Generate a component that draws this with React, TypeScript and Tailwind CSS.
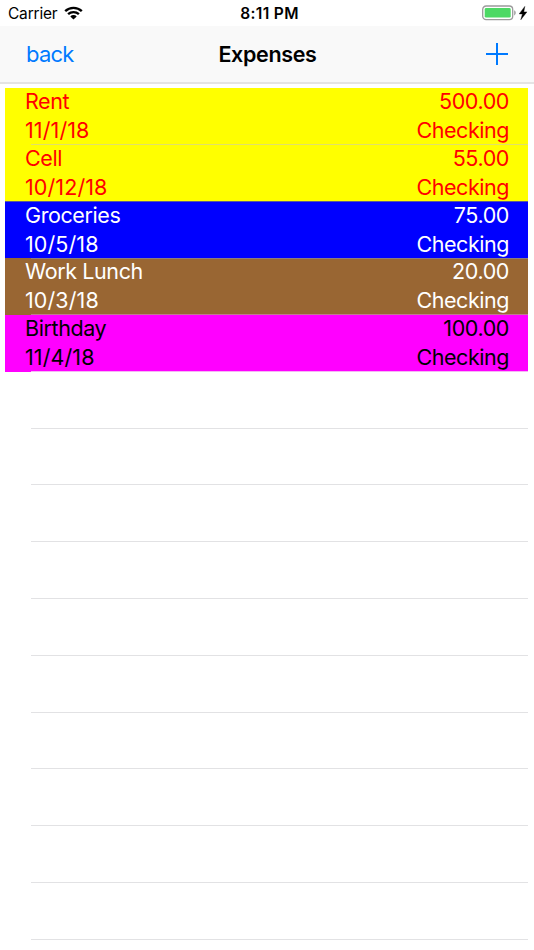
import React from 'react';

interface Expense {
  name: string;
  date: string;
  amount: string;
  account: string;
  colors: string;
  separator: string;
}

const expenses: Expense[] = [
  { name: 'Rent', date: '11/1/18', amount: '500.00', account: 'Checking', colors: 'bg-[#ffff00] text-[#ff0000]', separator: 'ml-[26px] bg-[#e0e06a]' },
  { name: 'Cell', date: '10/12/18', amount: '55.00', account: 'Checking', colors: 'bg-[#ffff00] text-[#ff0000]', separator: 'bg-[#5a5a9a]' },
  { name: 'Groceries', date: '10/5/18', amount: '75.00', account: 'Checking', colors: 'bg-[#0000ff] text-white', separator: 'ml-[26px] bg-[#8c7c80]' },
  { name: 'Work Lunch', date: '10/3/18', amount: '20.00', account: 'Checking', colors: 'bg-[#996633] text-white', separator: 'ml-[26px] bg-[#c07a90]' },
  { name: 'Birthday', date: '11/4/18', amount: '100.00', account: 'Checking', colors: 'bg-[#ff00ff] text-black', separator: 'ml-[26px] bg-[#f5b5f5]' },
];

const EMPTY_ROWS = 10;

function StatusBar() {
  return (
    <div className="h-[26px] grid grid-cols-3 items-center pl-2 pr-[6px] pt-[2px] text-black">
      <div className="flex items-center gap-[7px]">
        <span className="text-[15.5px] leading-6 tracking-[-0.2px]">Carrier</span>
        <svg width="19" height="14" viewBox="0 0 19 14" className="-mt-[2px]">
          <path d="M1.2 5.2a12 12 0 0 1 16.6 0" fill="none" stroke="currentColor" strokeWidth="2.4" />
          <path d="M4.1 8.2a7.8 7.8 0 0 1 10.8 0" fill="none" stroke="currentColor" strokeWidth="2.3" />
          <path d="M9.5 13.6 6.3 10.4a4.6 4.6 0 0 1 6.4 0Z" fill="currentColor" />
        </svg>
      </div>
      <div className="pl-[3px] text-center text-[15.5px] leading-6 font-semibold tracking-[0.35px]">8:11 PM</div>
      <div className="flex items-center justify-end gap-[2px] -mt-[2px]">
        <svg width="34" height="16" viewBox="0 0 34 16">
          <rect x="0.7" y="1" width="30" height="13.6" rx="3.4" fill="white" stroke="#9b9b9b" strokeWidth="1.3" />
          <rect x="2.7" y="3" width="26" height="9.6" rx="1.4" fill="#4cd964" />
          <path d="M32.2 5.2c2 .8 2 4.4 0 5.2Z" fill="#9b9b9b" />
        </svg>
        <svg width="10" height="14" viewBox="0 0 10 14">
          <path d="M6.8 0.4 1.2 7.9h3.2L2.8 13.8 8.9 5.9H5.8Z" fill="currentColor" stroke="currentColor" strokeWidth="0.4" />
        </svg>
      </div>
    </div>
  );
}

function NavBar() {
  return (
    <header className="h-[58px] grid grid-cols-3 items-center bg-[#f9f9f9] border-b-2 border-[#e4e4e4] pl-[26px] pr-[25px]">
      <button className="text-left text-[22px] leading-7 tracking-[-0.8px] text-[#007aff]">back</button>
      <h1 className="text-center text-[21.5px] leading-7 tracking-[-0.35px] font-semibold text-black">Expenses</h1>
      <button className="flex justify-end text-[#007aff]" aria-label="Add expense">
        <svg width="24" height="24" viewBox="0 0 24 24">
          <path d="M12 1v22M1 12h22" stroke="currentColor" strokeWidth="2" />
        </svg>
      </button>
    </header>
  );
}

function ExpenseRow({ expense }: { expense: Expense }) {
  return (
    <li className={`h-[56.75px] flex flex-col ${expense.colors}`}>
      <div className="flex-1 pl-5 pr-[19px] text-[21.5px]">
        <div className="h-[28px] flex justify-between leading-[27.5px] tracking-[-0.4px]">
          <span>{expense.name}</span>
          <span>{expense.amount}</span>
        </div>
        <div className="h-[28px] flex justify-between leading-[28.5px]">
          <span className="tracking-[0.1px]">{expense.date}</span>
          <span className="tracking-[-0.45px]">{expense.account}</span>
        </div>
      </div>
      <div className={`h-px shrink-0 ${expense.separator}`} />
    </li>
  );
}

export default function App() {
  return (
    <div className="w-full h-[950px] overflow-hidden bg-white font-['Inter',sans-serif]">
      <StatusBar />
      <NavBar />
      <ul className="mt-1 ml-[5px] mr-[6px]">
        {expenses.map(expense => (
          <ExpenseRow key={expense.name} expense={expense} />
        ))}
        {Array.from({ length: EMPTY_ROWS }, (_, i) => (
          <li key={i} className="h-[56.8px] flex flex-col justify-end">
            <div className="h-px ml-[26px] bg-[#e2e2e4]" />
          </li>
        ))}
      </ul>
    </div>
  );
}
